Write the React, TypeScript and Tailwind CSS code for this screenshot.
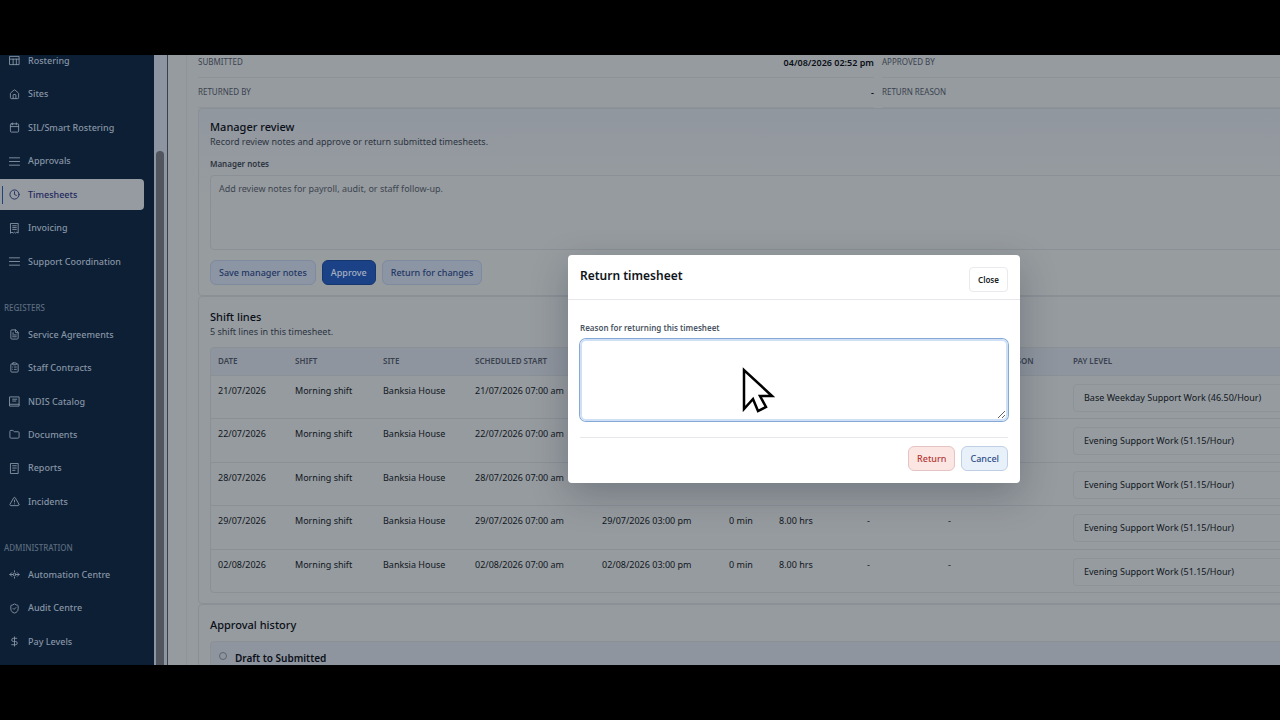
import type { ReactNode } from "react";
import {
  Calendar,
  ClipboardList,
  Clock,
  DollarSign,
  FileText,
  Folder,
  House,
  ShieldCheck,
  TriangleAlert,
} from "lucide-react";

const iconClasses = "size-[11px] shrink-0";

function Glyph({ children }: { children: ReactNode }) {
  return (
    <svg
      viewBox="0 0 24 24"
      fill="none"
      stroke="currentColor"
      strokeWidth="2"
      strokeLinecap="round"
      strokeLinejoin="round"
      className={iconClasses}
    >
      {children}
    </svg>
  );
}

const RosterIcon = () => (
  <Glyph>
    <path d="M2 3h20v18H2zM2 9h20M9 9v12M16 9v12" />
  </Glyph>
);

const InvoiceIcon = () => (
  <Glyph>
    <path d="M4 1h16v21l-3-2-2.500 2-2.500-2-2.500 2-3-2-2.500 2zM8 6h8M8 10h8M8 14h8" />
  </Glyph>
);

const LinesIcon = () => (
  <Glyph>
    <path d="M1 4h22M1 12h22M1 20h22" />
  </Glyph>
);

const CatalogIcon = () => (
  <Glyph>
    <path d="M2 2h20v20H2zM2 18h20M8 7h9M8 11h7" />
  </Glyph>
);

const ReportIcon = () => (
  <Glyph>
    <path d="M4 1h16v22H4zM8 6h8M8 11h8M8 16h5" />
  </Glyph>
);

const AutomationIcon = () => (
  <Glyph>
    <circle cx="12" cy="12" r="3" />
    <path d="M12 4v2M12 18v2M6 8l-4 4 4 4M18 8l4 4-4 4M2 12h7M15 12h7" />
  </Glyph>
);

type NavItem = { label: string; icon: ReactNode; active?: boolean };

const mainItems: NavItem[] = [
  { label: "Rostering", icon: <RosterIcon /> },
  { label: "Sites", icon: <House className={iconClasses} /> },
  { label: "SIL/Smart Rostering", icon: <Calendar className={iconClasses} /> },
  { label: "Approvals", icon: <LinesIcon /> },
  { label: "Timesheets", icon: <Clock className={iconClasses} />, active: true },
  { label: "Invoicing", icon: <InvoiceIcon /> },
  { label: "Support Coordination", icon: <LinesIcon /> },
];

const registerItems: NavItem[] = [
  { label: "Service Agreements", icon: <FileText className={iconClasses} /> },
  { label: "Staff Contracts", icon: <ClipboardList className={iconClasses} /> },
  { label: "NDIS Catalog", icon: <CatalogIcon /> },
  { label: "Documents", icon: <Folder className={iconClasses} /> },
  { label: "Reports", icon: <ReportIcon /> },
  { label: "Incidents", icon: <TriangleAlert className={iconClasses} /> },
];

const adminItems: NavItem[] = [
  { label: "Automation Centre", icon: <AutomationIcon /> },
  { label: "Audit Centre", icon: <ShieldCheck className={iconClasses} /> },
  { label: "Pay Levels", icon: <DollarSign className={iconClasses} /> },
];

function NavLink({ label, icon, active }: NavItem) {
  return (
    <a
      href="#"
      className={
        active
          ? "flex h-[31px] items-center gap-1.5 rounded-r bg-[#969ba1] pl-0.5 text-[#1f2a5e]"
          : "flex h-[31px] items-center gap-1.5 pl-0.5 text-[#8794a4]"
      }
    >
      <span className={active ? "h-[18px] w-px bg-[#1d4676]" : "h-[18px] w-px"} />
      {icon}
      <span className="pl-0.5 text-[9px] font-medium whitespace-nowrap">{label}</span>
    </a>
  );
}

function Sidebar() {
  return (
    <aside className="flex w-[168px] shrink-0 overflow-hidden">
      <nav className="-mt-2.5 w-[154px] shrink-0 bg-[#0c1f35] pr-2.5">
        <div className="flex h-[232px] flex-col justify-between">
          {mainItems.map((item) => (
            <NavLink key={item.label} {...item} />
          ))}
        </div>
        <h2 className="mt-6 mb-1 pl-1 text-[8px] leading-[14px] font-medium text-[#5c6b7d]">REGISTERS</h2>
        <div className="flex h-[198px] flex-col justify-between">
          {registerItems.map((item) => (
            <NavLink key={item.label} {...item} />
          ))}
        </div>
        <h2 className="mt-6 mb-1 pl-1 text-[8px] leading-[14px] font-medium text-[#5c6b7d]">ADMINISTRATION</h2>
        <div className="flex h-[98px] flex-col justify-between">
          {adminItems.map((item) => (
            <NavLink key={item.label} {...item} />
          ))}
        </div>
      </nav>
      <div className="flex flex-1 flex-col border-r border-[#3a4048] bg-[#8d95a2] px-0.5 pt-24">
        <div className="w-2 flex-1 rounded-t bg-[#50555e]" />
      </div>
    </aside>
  );
}

const shiftLines = [
  { date: "21/07/2026", pay: "Base Weekday Support Work (46.50/Hour)" },
  { date: "22/07/2026", pay: "Evening Support Work (51.15/Hour)" },
  { date: "28/07/2026", pay: "Evening Support Work (51.15/Hour)" },
  { date: "29/07/2026", pay: "Evening Support Work (51.15/Hour)" },
  { date: "02/08/2026", pay: "Evening Support Work (51.15/Hour)" },
];

const columns = [
  { label: "DATE", width: "w-[77px]" },
  { label: "SHIFT", width: "w-[88px]" },
  { label: "SITE", width: "w-[92px]" },
  { label: "SCHEDULED START", width: "w-[127px]" },
  { label: "SCHEDULED END", width: "w-[127px]" },
  { label: "BREAK", width: "w-[50px]" },
  { label: "HOURS", width: "w-[88px]" },
  { label: "VARIANCE", width: "w-[81px]" },
  { label: "ADJUSTMENT REASON", width: "w-[125px]" },
  { label: "PAY LEVEL", width: "w-auto" },
];

function ShiftTable() {
  return (
    <div className="mt-2 overflow-hidden rounded border border-[#8b9096]">
      <table className="h-[244px] w-full table-fixed text-left text-[9px] whitespace-nowrap text-[#101722]">
        <thead className="bg-[#8f959e] text-[8px] text-[#39424f]">
          <tr className="h-[27px]">
            {columns.map((col) => (
              <th key={col.label} className={`${col.width} px-[7px] font-semibold`}>
                {col.label}
              </th>
            ))}
          </tr>
        </thead>
        <tbody>
          {shiftLines.map((line) => (
            <tr key={line.date} className="border-t border-[#8b9096] align-top">
              <td className="px-[7px] pt-2">{line.date}</td>
              <td className="px-[7px] pt-2">Morning shift</td>
              <td className="px-[7px] pt-2">Banksia House</td>
              <td className="px-[7px] pt-2">{line.date} 07:00 am</td>
              <td className="px-[7px] pt-2">{line.date} 03:00 pm</td>
              <td className="px-[7px] pt-2">0 min</td>
              <td className="px-[7px] pt-2">8.00 hrs</td>
              <td className="px-[7px] pt-2">-</td>
              <td className="px-[7px] pt-2">-</td>
              <td className="px-[7px] pt-2">
                <select
                  aria-label={`Pay level for ${line.date}`}
                  className="h-7 w-full appearance-none rounded border border-[#8e9398] px-2.5"
                >
                  <option>{line.pay}</option>
                </select>
              </td>
            </tr>
          ))}
        </tbody>
      </table>
    </div>
  );
}

function MetaRow({ label, value }: { label: string; value?: string }) {
  return (
    <div className="flex h-[30px] items-center justify-between border-b border-[#8e9398]">
      <dt className="pb-0.5 text-[8px] text-[#39424f]">{label}</dt>
      <dd className="text-[9px] font-semibold text-[#0a0f18]">{value}</dd>
    </div>
  );
}

function TimesheetPage() {
  return (
    <main className="flex-1 overflow-hidden bg-[#969b9f] pr-[30px] pl-[18px]">
      <div className="-mt-[7px] border-l border-[#8f9498] pl-[11px]">
        <dl className="grid grid-cols-2 gap-x-2">
          <MetaRow label="SUBMITTED" value="04/08/2026 02:52 pm" />
          <MetaRow label="APPROVED BY" />
          <MetaRow label="RETURNED BY" value="-" />
          <MetaRow label="RETURN REASON" />
        </dl>

        <section className="rounded border border-[#8b9096] bg-linear-to-b from-[#91979f] to-[#979c9f] to-50% px-[11px] py-2.5">
          <h2 className="text-[11px] leading-4 font-medium text-[#0a0f18]">Manager review</h2>
          <p className="text-[9px] leading-[14px] text-[#2c343f]">
            Record review notes and approve or return submitted timesheets.
          </p>
          <label htmlFor="notes" className="mt-2 block text-[8px] leading-[14px] font-semibold text-[#2c343f]">
            Manager notes
          </label>
          <textarea
            id="notes"
            placeholder="Add review notes for payroll, audit, or staff follow-up."
            className="mt-1 block h-[75px] w-full resize-none rounded border border-[#8b9096] bg-[#969b9f] px-2 py-1.5 text-[9px] leading-[14px] placeholder:text-[#3d4550]"
          />
          <div className="mt-2.5 flex gap-1.5 text-[9px] font-medium">
            <button className="h-[25px] rounded-md border border-[#7f8a9f] bg-[#8c95a3] px-2 text-[#1f3765]">
              Save manager notes
            </button>
            <button className="h-[25px] rounded-md border border-[#16366f] bg-[#1b4286] px-2 text-[#a5b0c2]">
              Approve
            </button>
            <button className="h-[25px] rounded-md border border-[#7f8a9f] bg-[#8c95a3] px-2 text-[#1f3765]">
              Return for changes
            </button>
          </div>
        </section>

        <section className="rounded border border-[#8b9096] px-[11px] pt-3 pb-2.5">
          <h2 className="text-[11px] leading-4 font-medium text-[#0a0f18]">Shift lines</h2>
          <p className="text-[9px] leading-[14px] text-[#2c343f]">5 shift lines in this timesheet.</p>
          <ShiftTable />
        </section>

        <section className="rounded border border-[#8b9096] px-[11px] pt-3">
          <h2 className="text-[11px] leading-4 font-medium text-[#0a0f18]">Approval history</h2>
          <div className="mt-2 flex h-10 gap-2 rounded border border-[#8b9096] bg-[#8f959e] px-2 pt-2">
            <span className="mt-0.5 size-2 rounded-full border border-[#5c6470]" />
            <h3 className="text-[10px] leading-4 font-semibold text-[#0a0f18]">Draft to Submitted</h3>
          </div>
        </section>
      </div>
    </main>
  );
}

function ReturnDialog() {
  return (
    <div className="absolute inset-0 flex items-center justify-center pt-[18px]">
      <div
        role="dialog"
        aria-labelledby="dialog-title"
        className="w-[452px] rounded bg-white shadow-[0_12px_36px_rgba(15,23,42,0.25)]"
      >
        <header className="flex h-[45px] items-start justify-between border-b border-[#e5e7eb] px-3 pt-3">
          <h2 id="dialog-title" className="text-xs leading-[18px] font-semibold text-[#0f1419]">
            Return timesheet
          </h2>
          <button className="h-[25px] rounded border border-[#e8eaee] px-2 text-[8px] font-semibold text-[#1a1f27]">
            Close
          </button>
        </header>
        <div className="px-3 pt-[21px] pb-3">
          <label htmlFor="reason" className="block text-[8px] leading-[14px] font-semibold text-[#4b5563]">
            Reason for returning this timesheet
          </label>
          <textarea
            id="reason"
            className="mt-1 block h-[82px] w-full rounded-md border-2 border-[#cfe0f6] ring-1 ring-[#86a8d4] outline-none"
          />
          <footer className="mt-4 flex justify-end gap-1.5 border-t border-[#e5e7eb] pt-2 text-[9px] font-medium">
            <button className="h-[25px] rounded-md border border-[#e5c3c3] bg-[#fbe6e4] px-2 text-[#b43a34]">
              Return
            </button>
            <button className="h-[25px] rounded-md border border-[#bfd0e6] bg-[#e8f0fa] px-2 text-[#2d4f88]">
              Cancel
            </button>
          </footer>
        </div>
      </div>
    </div>
  );
}

function Pointer() {
  return (
    <svg viewBox="0 0 34 48" className="absolute top-[366px] left-[741px] h-12 w-[34px]">
      <path
        d="M3 4v39l9-10 5 12 8-4-6-11h12z"
        fill="#fff"
        stroke="#000"
        strokeWidth="2.500"
      />
    </svg>
  );
}

export default function App() {
  return (
    <div className="relative h-screen overflow-hidden bg-black py-[55px] font-['Noto_Sans',sans-serif]">
      <div className="relative flex h-full min-w-[1588px] overflow-hidden">
        <Sidebar />
        <TimesheetPage />
        <ReturnDialog />
      </div>
      <Pointer />
    </div>
  );
}
